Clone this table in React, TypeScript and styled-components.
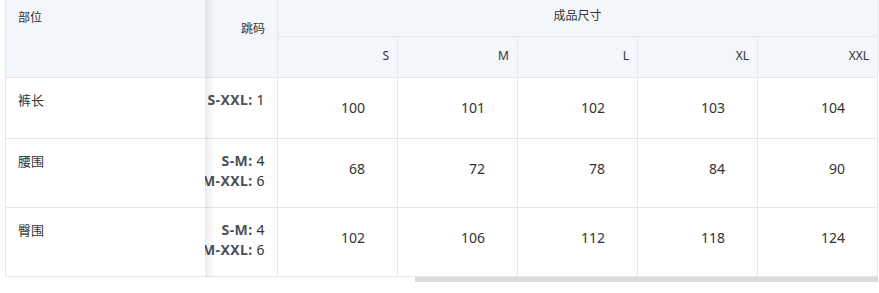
import React from 'react';
import styled, { createGlobalStyle } from 'styled-components';

const GlobalStyle = createGlobalStyle`
  body {
    margin: 0;
    background: #ffffff;
    font-family: "Noto Sans", "Noto Sans CJK SC", sans-serif;
    color: #333333;
  }
`;

const Page = styled.div`
  padding-left: 5px;
  width: 874px;
`;

const Grid = styled.div`
  display: grid;
  grid-template-columns: 199px 73px repeat(5, 120px);
  grid-template-rows: 37px 41px 61px 69px 69px;
  border-left: 1px solid #e4e7ec;
`;

const Cell = styled.div`
  box-sizing: border-box;
  border-bottom: 1px solid #e4e7ec;
  min-width: 0;
`;

const HeadCell = styled(Cell)`
  background: #f3f6fa;
  font-size: 12px;
  line-height: 16px;
  color: #333;
`;

const FixedHead = styled(HeadCell)`
  grid-row: 1 / span 2;
  grid-column: 1;
  padding: 10px 12px;
  position: relative;
  z-index: 2;

  &::after {
    content: '';
    position: absolute;
    top: 0;
    bottom: -1px;
    right: -10px;
    width: 10px;
    background: linear-gradient(to right, rgba(0, 0, 0, 0.08), rgba(0, 0, 0, 0));
  }
`;

const JumpHead = styled(HeadCell)`
  grid-row: 1 / span 2;
  grid-column: 2;
  border-right: 1px solid #e4e7ec;
  padding: 21px 12px 0 0;
  text-align: right;
`;

const GroupHead = styled(HeadCell)`
  grid-column: 3 / span 5;
  border-right: 1px solid #e4e7ec;
  text-align: center;
  padding-top: 8px;
`;

const SizeHead = styled(HeadCell)`
  border-right: 1px solid #e4e7ec;
  display: flex;
  align-items: center;
  justify-content: flex-end;
  padding: 0 8px 2px 0;
`;

const NameCell = styled(Cell)`
  grid-column: 1;
  padding: 12px 12px 0;
  font-size: 13px;
  line-height: 20px;
  position: relative;
  z-index: 2;
  background: #fff;

  &::after {
    content: '';
    position: absolute;
    top: 0;
    bottom: -1px;
    right: -10px;
    width: 10px;
    background: linear-gradient(to right, rgba(0, 0, 0, 0.08), rgba(0, 0, 0, 0));
  }
`;

const JumpCell = styled(Cell)`
  border-right: 1px solid #e4e7ec;
  overflow: hidden;
  display: flex;
  flex-direction: column;
  align-items: flex-end;
  padding: 12px 12px 0 0;
  font-size: 14px;
  line-height: 20px;
  letter-spacing: 0.4px;
  white-space: nowrap;
`;

const Range = styled.b`
  font-weight: 700;
  color: #4b505a;
`;

const ValueCell = styled(Cell)`
  border-right: 1px solid #e4e7ec;
  text-align: right;
  padding: 20px 32px 0 0;
  font-size: 14px;
  line-height: 20px;
  color: #333;
`;

const Track = styled.div`
  width: 873px;
  height: 5px;
  display: flex;
  justify-content: flex-end;
`;

const Thumb = styled.div<{ $width: number }>`
  width: ${({ $width }) => $width}px;
  height: 5px;
  background: #dcdcdc;
`;

const sizes = ['S', 'M', 'L', 'XL', 'XXL'];

const rows = [
  { name: '裤长', jumps: [['S-XXL:', '1']], values: [100, 101, 102, 103, 104] },
  { name: '腰围', jumps: [['S-M:', '4'], ['M-XXL:', '6']], values: [68, 72, 78, 84, 90] },
  { name: '臀围', jumps: [['S-M:', '4'], ['M-XXL:', '6']], values: [102, 106, 112, 118, 124] },
];

export default function App() {
  return (
    <Page>
      <GlobalStyle />
      <Grid>
        <FixedHead>部位</FixedHead>
        <JumpHead>跳码</JumpHead>
        <GroupHead>成品尺寸</GroupHead>
        {sizes.map((s) => (
          <SizeHead key={s}>{s}</SizeHead>
        ))}
        {rows.map((row) => (
          <React.Fragment key={row.name}>
            <NameCell>{row.name}</NameCell>
            <JumpCell>
              {row.jumps.map(([range, step]) => (
                <div key={range}>
                  <Range>{range}</Range> {step}
                </div>
              ))}
            </JumpCell>
            {row.values.map((v, i) => (
              <ValueCell key={i}>{v}</ValueCell>
            ))}
          </React.Fragment>
        ))}
      </Grid>
      <Track>
        <Thumb $width={463} />
      </Track>
    </Page>
  );
}
